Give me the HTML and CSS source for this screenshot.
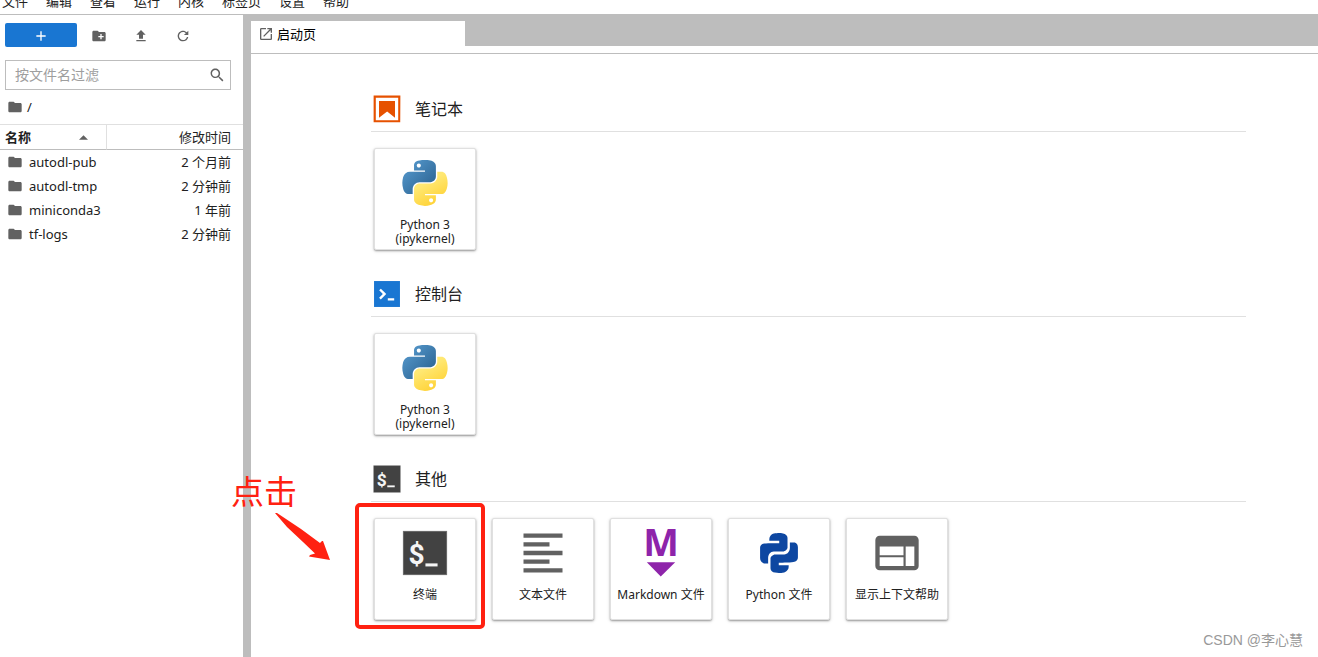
FILE: index.html
```html
<!DOCTYPE html>
<html lang="zh-CN">
<head>
<meta charset="utf-8">
<meta name="viewport" content="width=device-width, initial-scale=1">
<title>启动页</title>
<link rel="stylesheet" href="styles.css">
</head>
<body>
<nav class="menubar">
  <button>文件</button><button>编辑</button><button>查看</button><button>运行</button><button>内核</button><button>标签页</button><button>设置</button><button>帮助</button>
</nav>

<div class="workspace">
  <aside class="sidebar">
    <div class="toolbar">
      <button class="tool new" aria-label="新建启动页"><svg class="icon" viewBox="0 0 24 24"><path fill="#fff" d="M19 13h-6v6h-2v-6H5v-2h6V5h2v6h6v2z"/></svg></button>
      <button class="tool" aria-label="新建文件夹"><svg class="icon" viewBox="0 0 24 24"><path d="M20 6h-8l-2-2H4c-1.11 0-1.99.89-1.99 2L2 18c0 1.11.89 2 2 2h16c1.11 0 2-.89 2-2V8c0-1.11-.89-2-2-2zm-1 8h-3v3h-2v-3h-3v-2h3V9h2v3h3v2z"/></svg></button>
      <button class="tool" aria-label="上传"><svg class="icon" viewBox="0 0 24 24"><path d="M9 16h6v-6h4l-7-7-7 7h4zm-4 2h14v2H5z"/></svg></button>
      <button class="tool" aria-label="刷新"><svg class="icon" viewBox="0 0 18 18"><path d="M9 13.5c-2.49 0-4.5-2.01-4.5-4.5S6.51 4.5 9 4.5c1.24 0 2.36.52 3.17 1.33L10 8h5V3l-1.76 1.76C12.15 3.68 10.66 3 9 3 5.69 3 3.01 5.69 3.01 9S5.69 15 9 15c2.97 0 5.43-2.16 5.9-5h-1.52c-.46 2-2.24 3.5-4.38 3.5z"/></svg></button>
    </div>
    <label class="filter">
      <input type="text" placeholder="按文件名过滤" aria-label="按文件名过滤">
      <svg class="icon" viewBox="0 0 18 18"><path d="M12.1 10.9h-.7l-.2-.2c.8-.9 1.3-2.2 1.3-3.5 0-3-2.4-5.4-5.4-5.4S1.8 4.2 1.8 7.1s2.4 5.4 5.4 5.4c1.3 0 2.5-.5 3.5-1.3l.2.2v.7l4.1 4.1 1.2-1.2-4.1-4.1zm-5 0c-2.1 0-3.7-1.7-3.7-3.7s1.7-3.7 3.7-3.7 3.7 1.7 3.7 3.7-1.6 3.7-3.7 3.7z"/></svg>
    </label>
    <div class="crumbs"><svg class="icon"><use href="#folder"/></svg><span>/</span></div>
    <table class="files">
      <thead><tr><th class="name"><span class="sort">名称<svg class="caret" viewBox="0 0 10 5"><path d="M0 5 5 0l5 5z"/></svg></span></th><th class="time">修改时间</th></tr></thead>
      <tbody>
        <tr><td colspan="2"><span class="file"><svg class="icon"><use href="#folder"/></svg><span class="label">autodl-pub</span><span>2 个月前</span></span></td></tr>
        <tr><td colspan="2"><span class="file"><svg class="icon"><use href="#folder"/></svg><span class="label">autodl-tmp</span><span>2 分钟前</span></span></td></tr>
        <tr><td colspan="2"><span class="file"><svg class="icon"><use href="#folder"/></svg><span class="label">miniconda3</span><span>1 年前</span></span></td></tr>
        <tr><td colspan="2"><span class="file"><svg class="icon"><use href="#folder"/></svg><span class="label">tf-logs</span><span>2 分钟前</span></span></td></tr>
      </tbody>
    </table>
  </aside>

  <main class="dock">
    <div class="tabs"><button class="tab"><svg class="icon" viewBox="0 0 24 24"><path d="M19 19H5V5h7V3H5a2 2 0 0 0-2 2v14a2 2 0 0 0 2 2h14c1.1 0 2-.9 2-2v-7h-2v7zM14 3v2h3.59l-9.83 9.83 1.41 1.41L19 6.41V10h2V3h-7z"/></svg>启动页</button></div>
    <div class="launcher">
      <section>
        <h2><svg class="badge" viewBox="0 0 22 22"><path fill="#e65100" d="M18.7 3.3v15.4H3.3V3.3h15.4m1.5-1.5H1.8v18.3h18.3l.1-18.3z"/><path fill="#e65100" d="m16.5 17-5.400-4.300-5.600 4.300V5.500h11z"/></svg>笔记本</h2>
        <div class="cards"><button class="card"><span class="art"><svg class="logo"><use href="#python"/></svg></span><span class="caption">Python 3 (ipykernel)</span></button></div>
      </section>
      <section>
        <h2><svg class="badge" viewBox="0 0 200 200"><path fill="#1976d2" d="M19 19h162v162H19z"/><path fill="#fff" d="M105 127.3h40v12.8h-40zM51.1 77 74 99.9l-23.3 23.3 10.5 10.5 23.3-23.3L95 99.9 84.5 89.4 61.6 66.5z"/></svg>控制台</h2>
        <div class="cards"><button class="card"><span class="art"><svg class="logo"><use href="#python"/></svg></span><span class="caption">Python 3 (ipykernel)</span></button></div>
      </section>
      <section>
        <h2><svg class="badge"><use href="#terminal"/></svg>其他</h2>
        <div class="cards">
          <div class="marked">
            <button class="card"><span class="art"><svg><use href="#terminal"/></svg></span><span class="caption">终端</span></button>
            <span class="frame"></span>
            <span class="note">点击</span>
            <svg class="arrow" viewBox="0 0 55 47"><path fill="#ff2111" d="M0 0 2 0 26 16 45 30 47 28 48 28 55 47 34 43.500 35 42 40 40.500 28 29 12 14z"/></svg>
          </div>
          <button class="card"><span class="art"><svg viewBox="0 0 24 24"><path fill="#616161" d="M15 15H3v2h12v-2zm0-8H3v2h12V7zM3 13h18v-2H3v2zm0 8h18v-2H3v2zM3 3v2h18V3H3z"/></svg></span><span class="caption">文本文件</span></button>
          <button class="card"><span class="art"><svg viewBox="0 0 22 22"><text class="mark" x="11" y="12.400" text-anchor="middle">M</text><path fill="#8e24aa" d="M5 14.900h12l-6.100 6z"/></svg></span><span class="caption">Markdown 文件</span></button>
          <button class="card"><span class="art"><svg viewBox="0 0 22 22"><path fill="#0d47a1" d="M11.100 6.900V5.800H6.900c0-.5 0-1.300.2-1.600.4-.7.8-1.100 1.700-1.400 1.700-.3 2.500-.3 3.900-.1 1 .1 1.900.9 1.900 1.900v4.200c0 .5-.9 1.600-2 1.600H8.800c-1.500 0-2.400 1.400-2.400 2.800v2.200H4.700C3.500 15.100 3 14 3 13.100V9c-.1-1 .6-2 1.800-2 1.500-.1 6.300-.1 6.300-.1zM10.900 15.100v1.100h4.200c0 .5 0 1.300-.2 1.600-.4.7-.8 1.100-1.700 1.400-1.700.3-2.500.3-3.900.1-1-.1-1.900-.9-1.900-1.900v-4.200c0-.5.9-1.600 2-1.600h3.800c1.500 0 2.400-1.400 2.400-2.800V6.600h1.700c1.200 0 1.700 1.100 1.700 2v4.200c0 1-.7 2-1.900 2-1.500.3-6.200.3-6.200.3z"/></svg></span><span class="caption">Python 文件</span></button>
          <button class="card"><span class="art"><svg viewBox="0 0 24 24"><path fill="#616161" d="M20 4H4c-1.100 0-1.990.9-1.990 2L2 18c0 1.100.9 2 2 2h16c1.100 0 2-.9 2-2V6c0-1.100-.9-2-2-2zm-5 14H4v-4h11v4zm0-5H4V9h11v4zm5 5h-4V9h4v9z"/></svg></span><span class="caption">显示上下文帮助</span></button>
        </div>
      </section>
    </div>
  </main>
</div>
<div class="watermark">CSDN @李心慧</div>

<svg class="defs" width="0" height="0" aria-hidden="true">
  <defs>
    <linearGradient id="py-blue" x1="0" y1="0" x2="0.8" y2="0.8"><stop offset="0" stop-color="#5a9fd4"/><stop offset="1" stop-color="#306998"/></linearGradient>
    <linearGradient id="py-yellow" x1="0.7" y1="0.85" x2="0.4" y2="0.3"><stop offset="0" stop-color="#ffd43b"/><stop offset="1" stop-color="#ffe873"/></linearGradient>
    <symbol id="folder" viewBox="0 0 24 24"><path fill="#616161" d="M10 4H4c-1.1 0-1.99.9-1.99 2L2 18c0 1.1.9 2 2 2h16c1.1 0 2-.9 2-2V8c0-1.1-.9-2-2-2h-8l-2-2z"/></symbol>
    <symbol id="python" viewBox="-10 -10 131.16 132.39">
      <path fill="url(#py-blue)" d="M54.919 0C50.335.022 45.958.413 42.106 1.095 30.76 3.099 28.7 7.295 28.7 15.032v10.219h26.813v3.406H18.638c-7.793 0-14.616 4.684-16.75 13.594-2.462 10.213-2.571 16.586 0 27.25 1.906 7.938 6.457 13.594 14.25 13.594h9.218v-12.25c0-8.85 7.657-16.657 16.75-16.657h26.782c7.455 0 13.406-6.138 13.406-13.625V15.032c0-7.266-6.13-12.725-13.406-13.937C64.282.328 59.502-.02 54.919 0zm-14.5 8.22c2.769 0 5.031 2.298 5.031 5.124 0 2.817-2.262 5.094-5.031 5.094-2.78 0-5.032-2.277-5.032-5.094 0-2.826 2.252-5.124 5.032-5.124z"/>
      <path fill="url(#py-yellow)" d="M85.638 28.657v11.906c0 9.231-7.826 17-16.75 17H42.106c-7.336 0-13.406 6.279-13.406 13.625V96.72c0 7.266 6.318 11.54 13.406 13.625 8.487 2.495 16.626 2.946 26.782 0 6.75-1.955 13.406-5.888 13.406-13.625V86.5H55.513v-3.406H95.7c7.793 0 10.696-5.436 13.406-13.594 2.8-8.399 2.68-16.476 0-27.25-1.926-7.757-5.604-13.594-13.406-13.594zM70.575 93.313c2.78 0 5.032 2.278 5.032 5.094 0 2.826-2.252 5.125-5.032 5.125-2.769 0-5.031-2.299-5.031-5.125 0-2.816 2.262-5.094 5.031-5.094z"/>
    </symbol>
    <symbol id="terminal" viewBox="0 0 24 24">
      <rect x="1.8" y="1.8" width="20.4" height="20.4" fill="#757575"/><rect x="2.2" y="2.2" width="19.6" height="19.6" fill="#424242"/>
      <text class="dollar" x="4.4" y="17">$</text><rect x="12.200" y="16.800" width="5.600" height="1.400" fill="#f5f5f5"/>
    </symbol>
  </defs>
</svg>
</body>
</html>
```

FILE: styles.css
```css
* { box-sizing: border-box; }

body {
  margin: 0;
  height: 100vh;
  display: flex;
  flex-direction: column;
  overflow: hidden;
  background: #fff;
  color: #212121;
  font: 13px/16px "Noto Sans", "Noto Sans CJK SC", sans-serif;
}

button {
  border: 0;
  padding: 0;
  background: none;
  color: inherit;
  font: inherit;
}

svg { display: block; flex: none; }
.defs { position: absolute; }
.icon { width: 16px; height: 16px; fill: #616161; }

.menubar {
  flex: none;
  display: flex;
  align-items: flex-end;
  gap: 18px;
  height: 15px;
  padding: 0 2px 5px;
  border-bottom: 1px solid #bdbdbd;
}

.workspace {
  flex: 1;
  display: flex;
  min-height: 0;
}

.sidebar {
  flex: none;
  width: 243px;
  padding-top: 8px;
}

.toolbar {
  display: flex;
  height: 24px;
  padding-left: 5px;
}
.tool {
  display: grid;
  place-items: center;
  width: 42px;
  padding-top: 2px;
}
.tool.new {
  width: 72px;
  border-radius: 2px;
  background: #1976d2;
}
.new + .tool { margin-left: 1px; }

.filter {
  display: flex;
  align-items: center;
  height: 30px;
  margin: 13px 12px 0 5px;
  padding: 0 5px 0 9px;
  border: 1px solid #bdbdbd;
}
.filter input {
  flex: 1;
  min-width: 0;
  padding: 0;
  border: 0;
  outline: 0;
  background: none;
  font: 14px/20px "Noto Sans", "Noto Sans CJK SC", sans-serif;
}
.filter input::placeholder { color: #9e9e9e; }

.crumbs {
  display: flex;
  align-items: center;
  gap: 4px;
  height: 34px;
  padding-left: 7px;
}

.files {
  width: 100%;
  border-collapse: separate;
  border-spacing: 0;
}
.files th {
  height: 26px;
  padding: 0;
  border-top: 1px solid #e0e0e0;
  border-bottom: 1px solid #bdbdbd;
  text-align: left;
}
.files .name {
  width: 107px;
  padding: 0 18px 0 5px;
  border-right: 1px solid #e0e0e0;
}
.files .time {
  padding-right: 12px;
  font-weight: 400;
  text-align: right;
}
.files td { padding: 0; }
.sort {
  display: flex;
  align-items: center;
  justify-content: space-between;
}
.caret { width: 9px; height: 5px; fill: #616161; }
.file {
  display: flex;
  align-items: center;
  gap: 6px;
  height: 24px;
  padding: 0 12px 0 7px;
}
.file .label { flex: 1; }

.dock {
  flex: 1;
  min-width: 0;
  border-left: 8px solid #bdbdbd;
}

.tabs {
  height: 31px;
  padding-top: 6px;
  background: #bdbdbd;
}
.tab {
  display: flex;
  align-items: center;
  gap: 3px;
  width: 214px;
  height: 25px;
  padding: 0 7px;
  background: #fff;
  color: #000;
}

.launcher {
  margin-top: 7px;
  padding: 39px 72px 0 120px;
  border-top: 1px solid #bdbdbd;
}
.launcher section { margin-bottom: 28px; }
.launcher h2 {
  display: flex;
  align-items: center;
  gap: 12px;
  margin: 0 0 16px;
  padding-bottom: 6px;
  border-bottom: 1px solid #e0e0e0;
  font-size: 16px;
  font-weight: 400;
  line-height: 32px;
}
.badge { width: 32px; height: 32px; }

.cards {
  display: flex;
  flex-wrap: wrap;
  gap: 16px;
  padding-left: 3px;
}
.card {
  display: flex;
  flex-direction: column;
  align-items: center;
  width: 102px;
  height: 102px;
  border: 1px solid #e0e0e0;
  border-radius: 2px;
  background: #fff;
  box-shadow: 0 1px 2px rgba(0, 0, 0, .35), 0 1px 4px rgba(0, 0, 0, .12);
}
.art {
  display: grid;
  place-items: center;
  height: 69px;
  padding-bottom: 2px;
}
.art svg { width: 52px; height: 52px; }
.art .logo { width: 54px; height: 54px; }
.caption {
  padding: 0 5px;
  font-size: 12px;
  line-height: 14px;
}

.dollar { fill: #f5f5f5; font: 700 13px Roboto, sans-serif; }
.mark { fill: #8e24aa; font: 700 16px "Noto Sans", sans-serif; }

/* Hand-drawn callout over the terminal card */
.marked { position: relative; }
.frame {
  position: absolute;
  inset: -15px -9px -9px -19px;
  border: 4px solid #ff2111;
  border-radius: 5px;
  pointer-events: none;
}
.note {
  position: absolute;
  left: -143px;
  top: -46px;
  color: #ff2111;
  font-size: 33px;
  line-height: 40px;
  white-space: nowrap;
}
.arrow {
  position: absolute;
  left: -99px;
  top: -5px;
  width: 55px;
  height: 47px;
  overflow: visible;
}

.watermark {
  position: absolute;
  right: 15px;
  bottom: 7px;
  color: #999;
  font: 14px/20px "Liberation Sans", "Noto Sans CJK SC", sans-serif;
}
```
